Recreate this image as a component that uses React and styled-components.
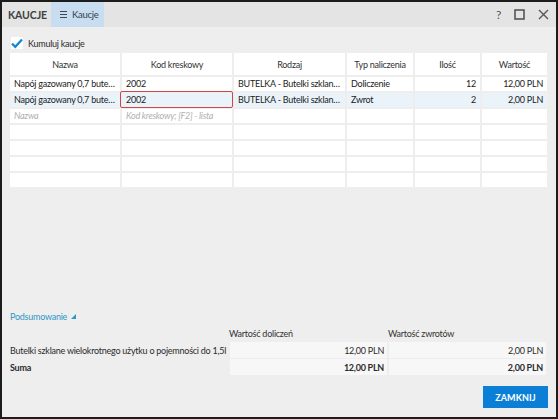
import React from "react";
import styled, { createGlobalStyle } from "styled-components";

const GlobalStyle = createGlobalStyle`
  html, body { margin: 0; padding: 0; background: #fff; }
  body { font-family: Lato, "Noto Sans", sans-serif; }
  * { box-sizing: border-box; }
`;

const Window = styled.div`
  width: 558px;
  height: 419px;
  border: 2px solid #1c1c1c;
  background: #eeeeee;
  display: flex;
  flex-direction: column;
  font-size: 9px;
  letter-spacing: -0.25px;
  color: #2b2b2b;
`;

const TitleBar = styled.div`
  height: 25px;
  flex: none;
  background: #e4e4e4;
  display: flex;
  align-items: stretch;
`;

const Title = styled.div`
  font-weight: 700;
  font-size: 10.5px;
  letter-spacing: -0.1px;
  color: #3f3f3f;
  padding: 0 4px 0 6px;
  display: flex;
  align-items: center;
`;

const Tab = styled.div`
  background: #c8def0;
  display: flex;
  align-items: center;
  gap: 5px;
  padding: 0 5px 0 9px;
  color: #2f3f4f;
  font-size: 9.5px;
`;

const WinButtons = styled.div`
  margin-left: auto;
  display: flex;
  align-items: center;
  gap: 13px;
  padding-right: 7px;
  color: #555;
`;

const Body = styled.div`
  flex: 1;
  display: flex;
  flex-direction: column;
  padding: 10px 8px 9px 6px;
`;

const CheckRow = styled.label`
  display: flex;
  align-items: center;
  gap: 5px;
  height: 12px;
  margin-left: 3px;
`;

const CheckBox = styled.span`
  width: 12px;
  height: 12px;
  background: #fff;
  display: flex;
  align-items: center;
  justify-content: center;
`;

const Grid = styled.div`
  margin: 4px 0 0 2px;
  display: grid;
  grid-template-columns: 110px 110px 111px 66px 65px 65px;
  grid-auto-rows: 14px;
  grid-template-rows: 22px;
  gap: 2px;
  width: 537px;
`;

const HeadCell = styled.div`
  background: #fff;
  display: flex;
  align-items: center;
  justify-content: center;
  color: #333;
`;

const Cell = styled.div`
  position: relative;
  background: ${(p) => (p.$selected ? "#e9f3f9" : "#fff")};
  padding: 0 4px;
  line-height: 14px;
  white-space: nowrap;
  text-overflow: ellipsis;
  text-align: ${(p) => (p.$right ? "right" : "left")};
  overflow: ${(p) => (p.$focus ? "visible" : "hidden")};
  color: ${(p) => (p.$placeholder ? "#b0b0b0" : "#222")};
  font-style: ${(p) => (p.$placeholder ? "italic" : "normal")};

  ${(p) =>
    p.$focus &&
    `&::after {
      content: "";
      position: absolute;
      inset: -2px -1px -1px -2px;
      border: 1px solid #d0454a;
      border-radius: 2px;
    }`}
`;

const Spacer = styled.div`
  flex: 1;
`;

const SummaryToggle = styled.div`
  height: 12px;
  color: #2e97c8;
  display: flex;
  align-items: center;
  gap: 4px;
  margin: 0 0 4px 2px;
`;

const SummaryGrid = styled.div`
  display: grid;
  grid-template-columns: 220px 157px 157px;
  grid-template-rows: 15px 16px 16px;
  gap: 1px 2px;
`;

const SumLabel = styled.div`
  display: flex;
  align-items: center;
  white-space: nowrap;
  padding-left: 2px;
  font-weight: ${(p) => (p.$bold ? 700 : 400)};
`;

const SumHead = styled.div`
  display: flex;
  align-items: center;
  color: #333;
  margin-left: -1px;
`;

const SumValue = styled.div`
  background: #f7f7f7;
  display: flex;
  align-items: center;
  justify-content: flex-end;
  padding-right: 3px;
  font-weight: ${(p) => (p.$bold ? 700 : 400)};
`;

const Footer = styled.div`
  display: flex;
  justify-content: flex-end;
  margin-top: 11px;
`;

const Button = styled.button`
  width: 65px;
  height: 22px;
  border: none;
  background: #0b7fd6;
  color: #fff;
  font-family: inherit;
  font-weight: 700;
  font-size: 9px;
  letter-spacing: 0.1px;
`;

const cols = ["Nazwa", "Kod kreskowy", "Rodzaj", "Typ naliczenia", "Ilość", "Wartość"];

const rows = [
  ["Napój gazowany 0,7 butelka", "2002", "BUTELKA - Butelki szklane wielokrotnego użytku", "Doliczenie", "12", "12,00 PLN"],
  ["Napój gazowany 0,7 butelka", "2002", "BUTELKA - Butelki szklane wielokrotnego użytku", "Zwrot", "2", "2,00 PLN"],
];

export default function App() {
  return (
    <>
      <GlobalStyle />
      <Window>
        <TitleBar>
          <Title>KAUCJE</Title>
          <Tab>
            <svg width="7" height="7" viewBox="0 0 7 7">
              <path d="M0 0.5h7M0 3.5h7M0 6.5h7" stroke="#3a4a5a" strokeWidth="1" />
            </svg>
            <span>Kaucje</span>
          </Tab>
          <WinButtons>
            <span style={{ fontSize: 12 }}>?</span>
            <svg width="11" height="11" viewBox="0 0 11 11">
              <rect x="1" y="1" width="9" height="9" fill="none" stroke="#555" strokeWidth="1.6" />
            </svg>
            <svg width="11" height="11" viewBox="0 0 11 11">
              <path d="M1 1L10 10M10 1L1 10" stroke="#555" strokeWidth="1.4" />
            </svg>
          </WinButtons>
        </TitleBar>
        <Body>
          <CheckRow>
            <CheckBox>
              <svg width="12" height="11" viewBox="0 0 12 11">
                <path d="M1 5.6L4.3 8.8L11 1.5" fill="none" stroke="#1686d3" strokeWidth="2.2" />
              </svg>
            </CheckBox>
            <span>Kumuluj kaucje</span>
          </CheckRow>
          <Grid>
            {cols.map((c) => (
              <HeadCell key={c}>{c}</HeadCell>
            ))}
            {rows.map((r, i) =>
              r.map((v, j) => (
                <Cell key={`${i}-${j}`} $selected={i === 1} $right={j >= 4} $focus={i === 1 && j === 1}>
                  {v}
                </Cell>
              ))
            )}
            <Cell $placeholder>Nazwa</Cell>
            <Cell $placeholder>Kod kreskowy; [F2] - lista</Cell>
            {Array.from({ length: 4 + 24 }).map((_, k) => (
              <Cell key={`e${k}`} />
            ))}
          </Grid>
          <Spacer />
          <SummaryToggle>
            <span>Podsumowanie</span>
            <svg width="5" height="5" viewBox="0 0 5 5">
              <path d="M5 0V5H0Z" fill="#2e97c8" />
            </svg>
          </SummaryToggle>
          <SummaryGrid>
            <div />
            <SumHead>Wartość doliczeń</SumHead>
            <SumHead>Wartość zwrotów</SumHead>
            <SumLabel>Butelki szklane wielokrotnego użytku o pojemności do 1,5l</SumLabel>
            <SumValue>12,00 PLN</SumValue>
            <SumValue>2,00 PLN</SumValue>
            <SumLabel $bold>Suma</SumLabel>
            <SumValue $bold>12,00 PLN</SumValue>
            <SumValue $bold>2,00 PLN</SumValue>
          </SummaryGrid>
          <Footer>
            <Button>ZAMKNIJ</Button>
          </Footer>
        </Body>
      </Window>
    </>
  );
}
